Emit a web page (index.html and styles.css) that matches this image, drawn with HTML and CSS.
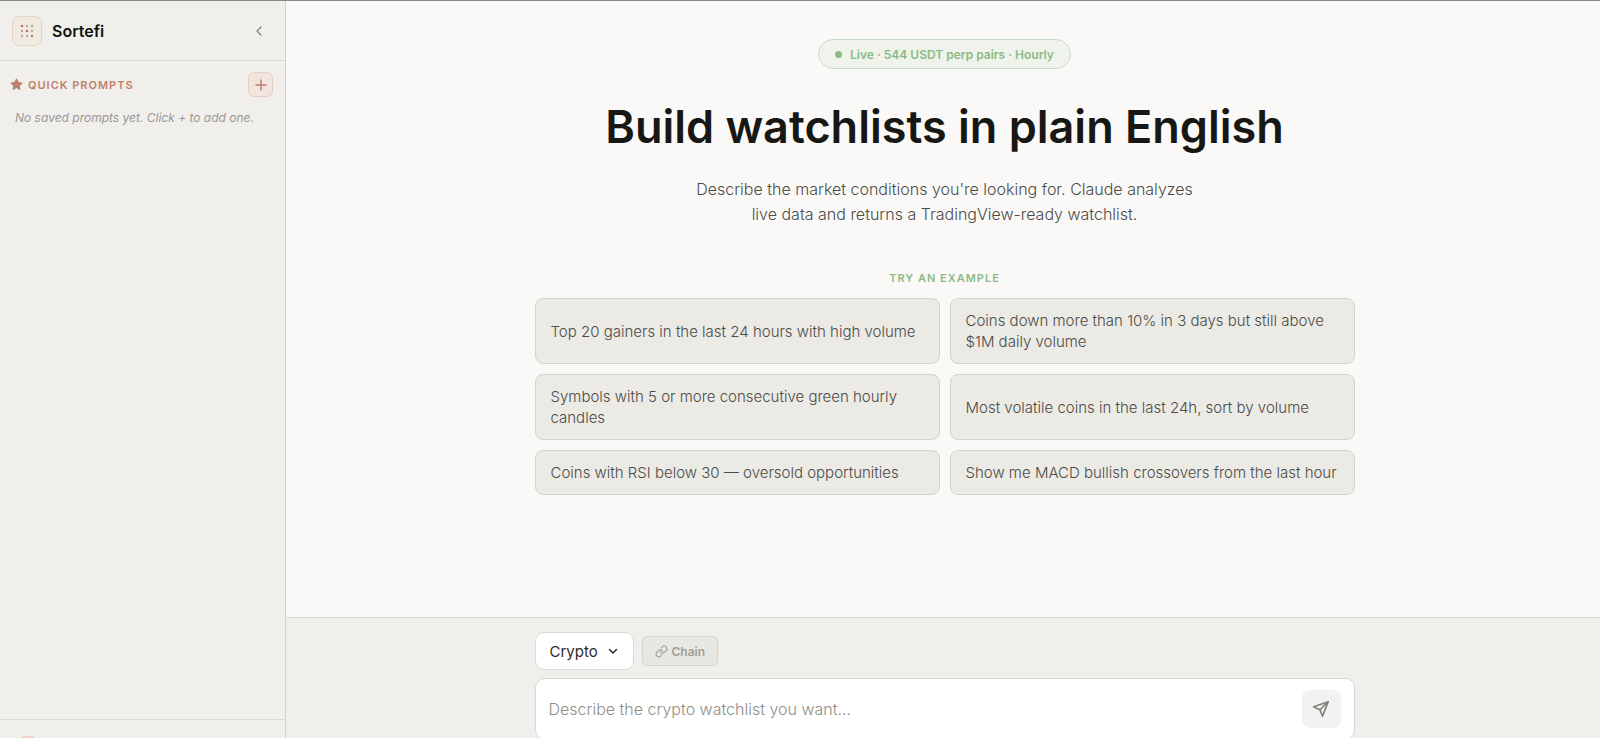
FILE: index.html
```html
<!DOCTYPE html>
<html lang="en">
<head>
<meta charset="utf-8">
<title>Sortefi</title>
<meta name="viewport" content="width=device-width, initial-scale=1">
<link rel="stylesheet" href="styles.css">
</head>
<body>
<div class="app">
  <aside class="sidebar">
    <header class="brand">
      <span class="brand-mark">
        <svg width="14" height="14" viewBox="0 0 14 14" fill="#b3ae9f">
          <circle cx="2" cy="2" r="1.3" fill="#c0705c"/><circle cx="7" cy="2" r="1.2"/><circle cx="12" cy="2" r="1.2"/>
          <circle cx="2" cy="7" r="1.2"/><circle cx="7" cy="7" r="1.3" fill="#b5765f"/><circle cx="12" cy="7" r="1.2"/>
          <circle cx="2" cy="12" r="1.2"/><circle cx="7" cy="12" r="1.2"/><circle cx="12" cy="12" r="1.3" fill="#a98a7d"/>
        </svg>
      </span>
      <span class="brand-name">Sortefi</span>
      <button class="collapse" type="button" aria-label="Collapse sidebar">
        <svg width="16" height="16" viewBox="0 0 16 16" fill="none" stroke="currentColor" stroke-width="1.3" stroke-linecap="round" stroke-linejoin="round"><path d="M10 4 6 8l4 4"/></svg>
      </button>
    </header>
    <section class="prompts">
      <div class="prompts-head">
        <svg width="13" height="13" viewBox="0 0 24 24" fill="currentColor" stroke="currentColor" stroke-width="2" stroke-linejoin="round"><path d="m12 2 3.1 6.3 6.9 1-5 4.9 1.2 6.8L12 17.8 5.8 21 7 14.2 2 9.3l6.900-1z"/></svg>
        <h2 class="prompts-title">QUICK PROMPTS</h2>
        <button class="add" type="button" aria-label="Add prompt">
          <svg width="12" height="12" viewBox="0 0 12 12" fill="none" stroke="currentColor" stroke-width="1.5" stroke-linecap="round"><path d="M6 1v10M1 6h10"/></svg>
        </button>
      </div>
      <p class="empty">No saved prompts yet. Click + to add one.</p>
    </section>
    <footer class="account"><span class="avatar"></span></footer>
  </aside>
  <main class="main">
    <section class="hero">
      <p class="live"><span class="dot"></span>Live · 544 USDT perp pairs · Hourly</p>
      <h1 class="title">Build watchlists in plain English</h1>
      <p class="lead">Describe the market conditions you're looking for. Claude analyzes<br>live data and returns a TradingView-ready watchlist.</p>
      <h2 class="try">TRY AN EXAMPLE</h2>
      <div class="examples">
        <button class="example" type="button">Top 20 gainers in the last 24 hours with high volume</button>
        <button class="example" type="button">Coins down more than 10% in 3 days but still above $1M daily volume</button>
        <button class="example" type="button">Symbols with 5 or more consecutive green hourly candles</button>
        <button class="example" type="button">Most volatile coins in the last 24h, sort by volume</button>
        <button class="example" type="button">Coins with RSI below 30 — oversold opportunities</button>
        <button class="example" type="button">Show me MACD bullish crossovers from the last hour</button>
      </div>
    </section>
    <form class="composer">
      <div class="composer-inner">
        <div class="tools">
          <span class="select-wrap">
            <select class="market" aria-label="Market"><option>Crypto</option></select>
            <svg class="caret" width="12" height="12" viewBox="0 0 12 12" fill="none" stroke="currentColor" stroke-width="1.5" stroke-linecap="round" stroke-linejoin="round"><path d="m2.5 4.5 3.5 3.5 3.5-3.5"/></svg>
          </span>
          <button class="chain" type="button">
            <svg width="13" height="13" viewBox="0 0 24 24" fill="none" stroke="currentColor" stroke-width="2" stroke-linecap="round" stroke-linejoin="round"><path d="M10 13a5 5 0 0 0 7.54.54l3-3a5 5 0 0 0-7.07-7.07l-1.72 1.71"/><path d="M14 11a5 5 0 0 0-7.54-.54l-3 3a5 5 0 0 0 7.07 7.07l1.71-1.71"/></svg>
            Chain
          </button>
        </div>
        <div class="box">
          <input class="query" type="text" aria-label="Watchlist description" placeholder="Describe the crypto watchlist you want…">
          <button class="send" type="submit" aria-label="Send">
            <svg width="18" height="18" viewBox="0 0 24 24" fill="none" stroke="currentColor" stroke-width="2.2" stroke-linecap="round" stroke-linejoin="round"><path d="M21.5 2.5 14 21.5l-3.5-8.5L2 9z"/><path d="m21.5 2.5-11 10.5"/></svg>
          </button>
        </div>
      </div>
    </form>
  </main>
</div>
</body>
</html>
```
FILE: styles.css
```css
* { box-sizing: border-box; }
html, body { height: 100%; }
body {
  margin: 0;
  overflow: hidden;
  background: #faf9f7;
  color: #4c4c48;
  font-family: Inter, sans-serif;
}
h1, h2, p { margin: 0; }
button, input, select { font: inherit; color: inherit; margin: 0; }
button { cursor: pointer; padding: 0; }
svg { display: block; flex: none; }

.app {
  display: grid;
  grid-template-columns: 286px 1fr;
  border-top: 1px solid #8c8885;
}
.sidebar {
  display: flex;
  flex-direction: column;
  background: #f1efeb;
  border-right: 1px solid #d3d2ce;
}
.brand {
  display: flex;
  align-items: center;
  gap: 10px;
  height: 60px;
  padding: 0 16px 0 12px;
  border-bottom: 1px solid #dcdad6;
}
.brand-mark {
  display: grid;
  place-items: center;
  width: 30px;
  height: 30px;
  border: 1px solid #e4d5c9;
  border-radius: 7px;
  background: #f0eae1;
}
.brand-name { flex: 1; font-size: 16px; font-weight: 600; color: #141412; }
.collapse {
  display: grid;
  place-items: center;
  width: 20px;
  height: 24px;
  border: 0;
  background: none;
  color: #85847f;
}
.prompts { padding: 11px 12px 0 10px; }
.prompts-head { display: flex; align-items: center; gap: 5px; color: #bf806a; }
.prompts-title { flex: 1; font-size: 11px; font-weight: 600; letter-spacing: 1px; }
.add {
  display: grid;
  place-items: center;
  width: 25px;
  height: 25px;
  border: 1px solid #e6cfc4;
  border-radius: 6px;
  background: #f1e6df;
  color: #bf806a;
}
.empty { padding: 12px 5px; font-size: 12px; line-height: 18px; font-style: italic; color: #999892; }
.account {
  margin-top: auto;
  padding: 16px 12px 12px;
  border-top: 1px solid #dcdad6;
}
.avatar {
  display: block;
  width: 32px;
  height: 32px;
  border: 1px solid #e6bfae;
  border-radius: 50%;
  background: #f3e6dd;
}

.main { display: flex; flex-direction: column; }
.hero {
  display: flex;
  flex-direction: column;
  align-items: center;
  padding: 38px 20px 122px 23px;
}
.live {
  display: flex;
  align-items: center;
  gap: 8px;
  height: 30px;
  padding: 0 16px;
  border: 1px solid #c7dcc5;
  border-radius: 15px;
  background: #eff3eb;
  color: #8abb86;
  font-size: 12px;
  font-weight: 600;
}
.dot { width: 7px; height: 7px; border-radius: 50%; background: #8abb86; }
.title {
  margin-top: 30px;
  color: #171714;
  font-size: 45px;
  line-height: 56px;
  font-weight: 600;
  text-align: center;
}
.lead { margin-top: 22px; font-size: 16px; line-height: 25px; font-weight: 300; text-align: center; }
.try {
  margin-top: 43px;
  color: #8abb86;
  font-size: 11px;
  line-height: 16px;
  font-weight: 600;
  letter-spacing: 1px;
}
.examples {
  display: grid;
  grid-template-columns: 1fr 1fr;
  gap: 10px;
  width: 100%;
  max-width: 820px;
  margin-top: 12px;
}
.example {
  min-height: 45px;
  padding: 11px 15px;
  border: 1px solid #cbdac8;
  border-radius: 8px;
  background: #ebeae5;
  font-size: 15px;
  line-height: 21px;
  font-weight: 300;
  text-align: left;
}

.composer {
  padding: 14px 20px 40px 23px;
  border-top: 1px solid #d7d6d1;
  background: #f1efeb;
}
.composer-inner { max-width: 820px; margin: 0 auto; }
.tools { display: flex; align-items: center; gap: 8px; }
.select-wrap { display: grid; align-items: center; color: #2c2c29; }
.market {
  grid-area: 1 / 1;
  appearance: none;
  width: 99px;
  height: 38px;
  padding: 0 14px;
  border: 1px solid #dad9d4;
  border-radius: 9px;
  background: #fff;
  font-size: 15px;
}
.caret { grid-area: 1 / 1; justify-self: end; margin-right: 15px; pointer-events: none; }
.chain {
  display: flex;
  align-items: center;
  gap: 4px;
  height: 30px;
  padding: 0 12px;
  border: 1px solid #d6d5cf;
  border-radius: 5px;
  background: #e8e7e2;
  color: #a09f98;
  font-size: 12px;
  font-weight: 600;
}
.box {
  display: flex;
  align-items: center;
  margin-top: 8px;
  padding: 11px 13px;
  border: 1px solid #d8d7d2;
  border-radius: 10px;
  background: #fff;
}
.query { flex: 1; min-width: 0; padding: 0; border: 0; outline: 0; background: none; font-size: 16px; font-weight: 300; }
.query::placeholder { color: #8f8e89; opacity: 1; }
.send {
  display: grid;
  place-items: center;
  width: 39px;
  height: 38px;
  border: 0;
  border-radius: 8px;
  background: #f2f2f1;
  color: #85847f;
}
```
